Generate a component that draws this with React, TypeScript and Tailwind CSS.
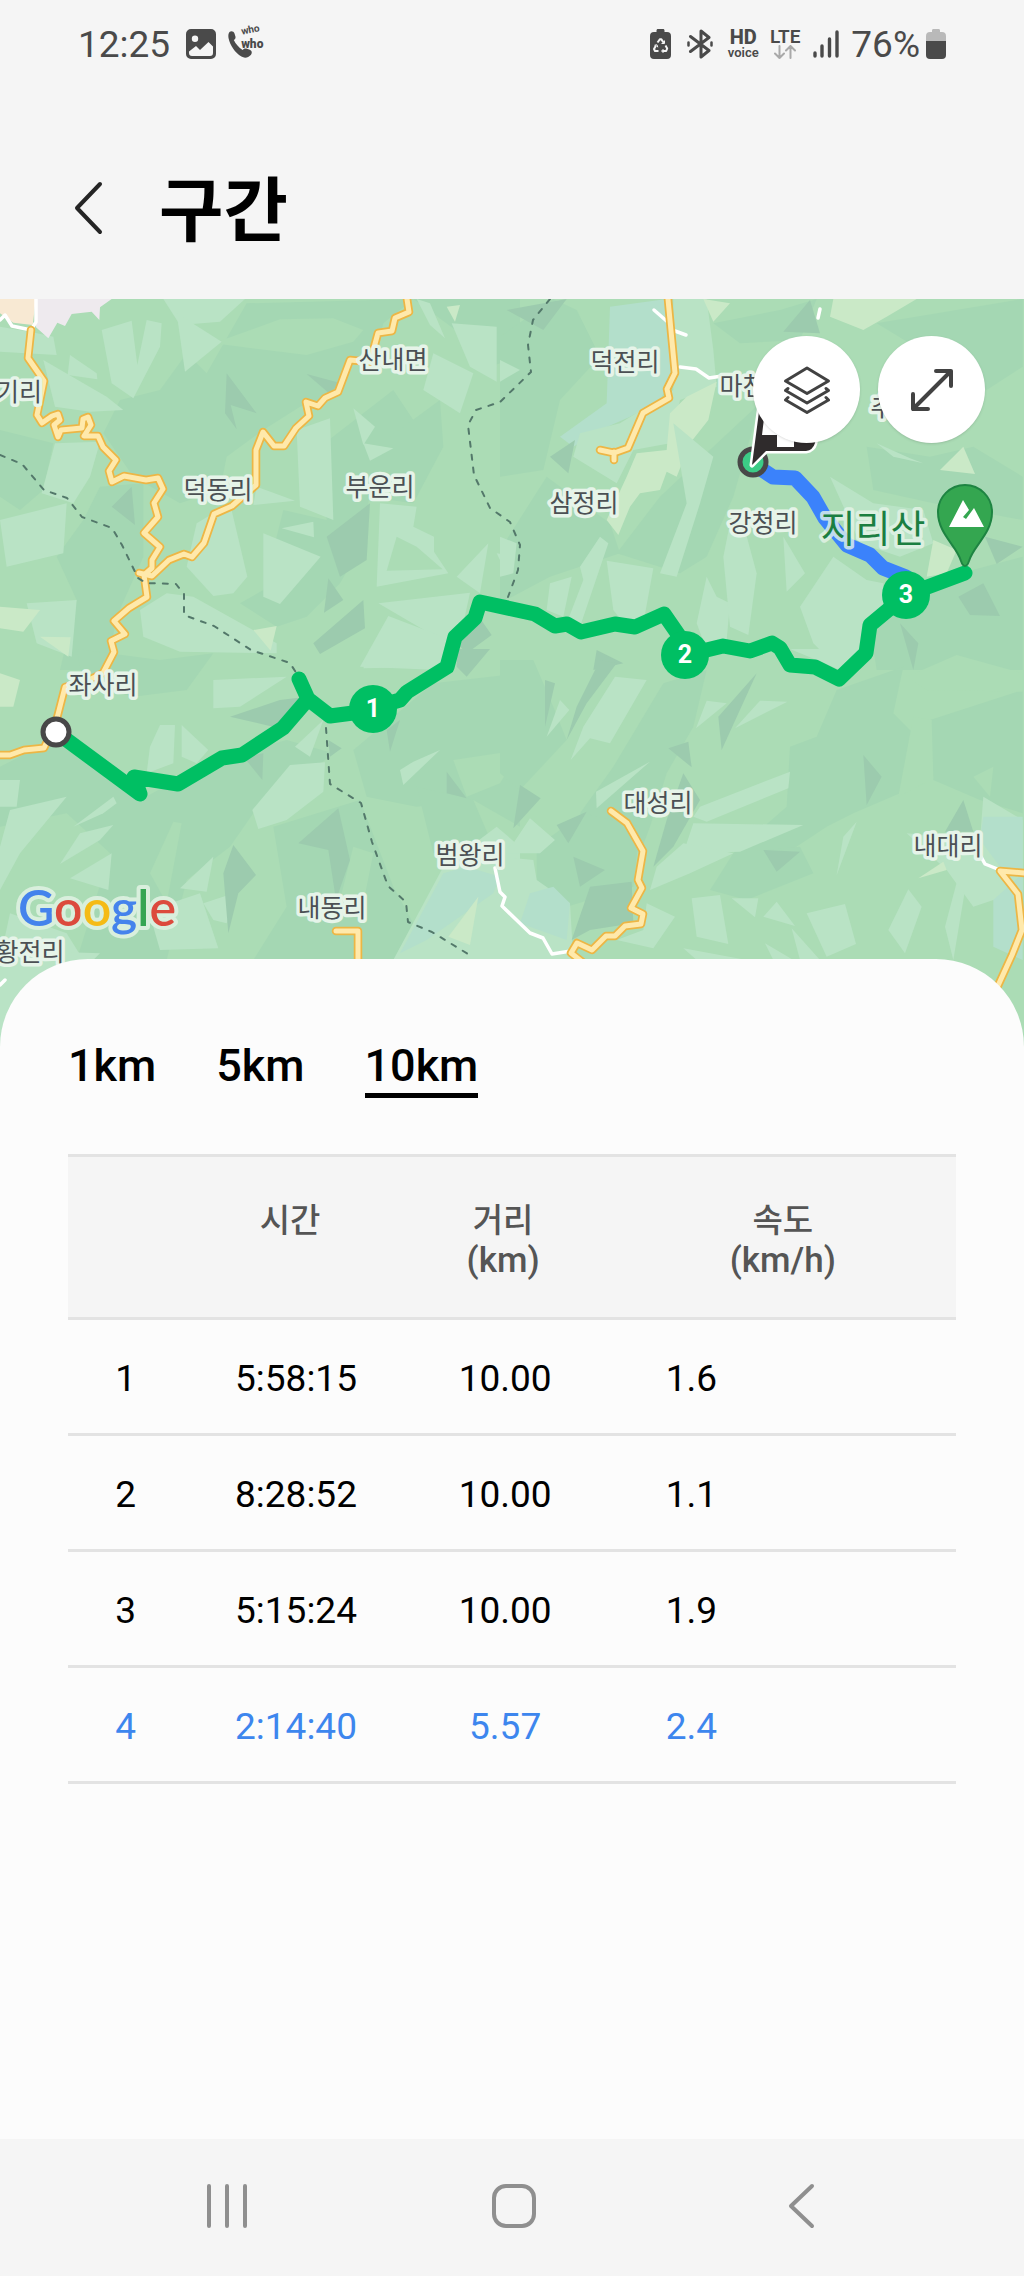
/**
 * Workout section screen - route map on top, split table per distance below
 */

import { useState } from 'react';
import clsx from 'clsx';

type Facet = [fill: string, points: string];

interface Tile {
  x: number;
  y: number;
  facets: Facet[];
}

interface Split {
  time: string;
  distance: string;
  speed: string;
  partial?: boolean;
}

const COOL = '#a4d7b3';
const WARM = '#abdcb5';
const LIGHT = '#b9e3c5';
const SHADE = '#9ccbae';
const PALE = '#cae9c7';
const TEAL = '#b3dfcb';

const UNITS = ['1km', '5km', '10km'];

const SPLITS: Split[] = [
  { time: '5:58:15', distance: '10.00', speed: '1.6' },
  { time: '8:28:52', distance: '10.00', speed: '1.1' },
  { time: '5:15:24', distance: '10.00', speed: '1.9' },
  { time: '2:14:40', distance: '5.57', speed: '2.4', partial: true },
];

// Terrain is stored in tiles at three times the map resolution
const TILES: Tile[] = [
  {
    x: 0,
    y: 290,
    facets: [
      [COOL, '480,300 560,190 620,250 740,40 1240,27 1150,100 1130,180 1040,210 1010,310 900,350 790,420 680,500 660,600 540,640 400,560 310,430 360,330'],
      [WARM, '640,160 840,88 1000,85 1090,120 1060,155 920,195'],
      [COOL, '300,590 430,580 430,800 350,980 320,1140 180,1140 230,930 170,800 250,690'],
      [COOL, '960,470 1180,300 1300,480 1110,600 1090,760 1020,880 920,980 830,1010 720,940 790,900 850,660 980,690'],
      [COOL, '1240,27 1560,27 1560,200 1440,240 1380,130'],
      [COOL, '1170,440 1320,330 1330,470 1240,640 1170,630'],
      [COOL, '0,420 160,460 130,600 60,660 0,620'],
      [LIGHT, '0,110 90,125 160,140 170,195 0,185'],
      [LIGHT, '305,120 395,92 412,225 440,90 485,100 480,170 400,325 335,280'],
      [LIGHT, '490,27 735,27 660,95 540,105'],
      [LIGHT, '530,70 665,155 555,245'],
      [LIGHT, '210,195 290,250 292,268 203,255'],
      [LIGHT, '130,210 320,320 370,360 270,365 165,350'],
      [LIGHT, '165,460 300,455 270,560 220,640 125,610'],
      [LIGHT, '890,420 990,385 1000,690 900,650'],
      [LIGHT, '1060,355 1125,410 1090,465'],
      [LIGHT, '1090,460 1180,475 1110,512'],
      [LIGHT, '1300,190 1420,250 1380,370 1270,300'],
      [LIGHT, '1355,100 1490,110 1490,275 1410,230'],
      [LIGHT, '1250,27 1290,40 1335,145 1290,105'],
      [LIGHT, '790,730 962,800 840,942 790,920'],
      [LIGHT, '590,700 690,640 742,860 700,910 640,918 560,830'],
      [LIGHT, '1140,640 1250,650 1240,710 1302,740 1302,785 1345,850 1130,890'],
      [LIGHT, '845,715 940,695 942,742'],
      [LIGHT, '770,590 885,632 760,645'],
      [LIGHT, '1370,860 1465,760 1440,910'],
      [LIGHT, '1490,790 1552,800 1540,890'],
      [LIGHT, '1135,940 1410,908 1390,1000 1340,1060'],
      [LIGHT, '1165,978 1340,1045 1320,1140 1080,1130'],
      [LIGHT, '0,690 200,640 190,790 20,830'],
      [LIGHT, '500,910 580,920 830,1060 830,1090 540,1085 430,1040 420,960'],
      [LIGHT, '80,940 230,930 215,1100 110,1060'],
      [WARM, '1190,740 1250,770 1328,838 1160,842'],
      [SHADE, '680,250 770,370 692,345 710,418 675,370'],
      [SHADE, '920,252 1018,278 990,312'],
      [SHADE, '1110,640 1100,810 1020,860 980,740'],
      [SHADE, '985,865 1030,930 972,968'],
      [SHADE, '1090,930 1095,1015 960,1092 940,1060'],
      [SHADE, '1440,985 1475,1035 1400,1090 1370,1060'],
      [SHADE, '395,590 405,705 335,650'],
      [PALE, '760,1020 830,1008 812,1082'],
      [PALE, '120,1040 212,1042 205,1100'],
      [PALE, '0,950 120,960 70,1025 0,1015'],
      [PALE, '1340,50 1380,45 1365,95'],
      ['#f8e9d3', '0,27 108,27 98,105 40,98 0,70'],
      ['#eeeaee', '108,27 335,27 300,52 298,90 275,65 215,72 195,108 172,98 145,145 108,112'],
    ],
  },
  {
    x: 500,
    y: 290,
    facets: [
      [COOL, '0,140 160,27 230,60 300,200 180,330 130,540 0,560'],
      [COOL, '0,780 140,560 330,700 360,790 150,860 0,940'],
      [COOL, '640,470 780,340 700,620 620,800 540,850 350,790 480,620'],
      [COOL, '1100,470 1290,500 1420,470 1568,560 1568,690 1300,640 1120,600'],
      [COOL, '1340,860 1568,800 1568,1140 1130,1140 1110,1010'],
      [COOL, '1130,100 1568,27 1568,230 1460,300'],
      [TEAL, '330,50 500,27 530,240 480,330 390,380 300,420 220,470 180,440 320,340'],
      [LIGHT, '520,27 620,27 640,180 650,290 540,330 510,460 400,480 350,580 220,500 240,430 360,400 520,300'],
      [PALE, '560,320 650,275 625,390 570,460 530,560 500,545 480,600 420,610 390,650 355,735 320,690 380,560 410,490 500,480 510,370'],
      [PALE, '1000,27 1250,27 1160,80 1090,120 990,80'],
      [PALE, '610,27 690,40 640,95'],
      [COOL, '640,100 840,60 950,27 900,150 720,160'],
      [SHADE, '930,30 960,130 850,125'],
      [SHADE, '20,60 200,27 130,120'],
      [LIGHT, '0,210 60,240 0,275'],
      [LIGHT, '320,812 460,835 430,1000 370,1000 340,960'],
      [LIGHT, '240,830 300,740 325,760 240,1010 200,1000 250,870'],
      [LIGHT, '150,880 215,860 190,980 140,960'],
      [LIGHT, '620,860 650,920 690,940 680,1050 620,1080 590,1000'],
      [LIGHT, '690,700 735,720 770,850 745,1035 690,1010 670,800'],
      [LIGHT, '850,740 915,850 860,905'],
      [LIGHT, '900,950 1000,800 1100,870 1150,880 1150,960 1090,1000 1080,1080 1020,1140 940,1060'],
      [LIGHT, '990,560 1120,640 1270,660 1300,760 1200,800 1080,760'],
      [LIGHT, '1130,460 1230,505 1270,520 1180,500'],
      [LIGHT, '520,400 640,500 600,640 530,860 480,850 560,640'],
      [LIGHT, '0,740 50,760 40,850 0,860'],
      [PALE, '1320,540 1390,470 1425,552'],
      [PALE, '1300,750 1370,780 1340,850 1280,860'],
      [SHADE, '1375,920 1450,880 1500,978 1410,975'],
      [SHADE, '1455,740 1568,770 1490,822'],
      [SHADE, '150,500 225,450 205,550'],
      [SHADE, '290,1080 370,1120 280,1140'],
      [SHADE, '1200,1000 1255,1060 1240,1140'],
    ],
  },
  {
    x: 0,
    y: 640,
    facets: [
      [COOL, '0,380 160,300 420,480 640,360 860,300 1000,340 900,420 760,520 690,620 560,720 500,960 230,960 330,640 200,520 0,560'],
      [COOL, '230,27 480,60 640,40 560,150 400,170 250,130'],
      [COOL, '1060,330 1300,130 1560,100 1560,560 1420,480 1250,500 1100,470'],
      [COOL, '820,560 1080,480 1180,740 1240,850 1180,960 760,960 860,800'],
      [COOL, '1250,440 1420,480 1480,620 1300,640'],
      [WARM, '1360,360 1560,330 1500,430 1400,470'],
      [LIGHT, '30,510 200,470 60,640 0,750 0,620'],
      [LIGHT, '0,420 60,420 50,500 0,500'],
      [LIGHT, '480,255 525,255 520,370 440,400 450,320'],
      [LIGHT, '545,255 625,330 590,370 545,350'],
      [LIGHT, '340,470 350,490 310,520 220,560'],
      [LIGHT, '340,555 300,600 180,672 240,580'],
      [LIGHT, '870,375 975,367 970,455 860,540 775,567 757,510'],
      [LIGHT, '335,640 325,750 210,715'],
      [LIGHT, '640,650 620,755 540,745'],
      [LIGHT, '480,800 600,760 655,925 480,930 460,860'],
      [LIGHT, '610,790 715,755 680,850 640,840'],
      [LIGHT, '1320,330 1210,435 1200,390 1240,365'],
      [LIGHT, '1110,27 1370,27 1320,80 1090,85'],
      [LIGHT, '640,120 860,110 720,200 640,205'],
      [LIGHT, '970,240 930,350 885,320'],
      [LIGHT, '30,820 200,880 250,960 0,960'],
      [LIGHT, '0,930 300,940 60,1180 0,1260'],
      [LIGHT, '1330,680 1490,560 1560,620 1560,960 1180,960'],
      [TEAL, '1330,700 1400,680 1500,710 1480,760 1280,900 1200,940'],
      [PALE, '1435,770 1410,915 1345,890'],
      [PALE, '0,100 60,120 40,200 0,200'],
      [WARM, '520,545 545,550 500,790 450,700'],
      [WARM, '1060,620 1120,640 1090,790 1020,780'],
      [SHADE, '1015,505 1050,660 1008,780 985,630 895,610'],
      [SHADE, '700,615 768,705 715,760 685,880 670,700'],
      [SHADE, '1340,395 1400,475 1340,460'],
      [SHADE, '690,230 840,180 920,170 860,270'],
      [SHADE, '730,350 790,340 787,420'],
      [SHADE, '1160,270 1200,240 1170,335'],
      [SHADE, '985,300 1025,325 990,350'],
      [SHADE, '1370,27 1470,27 1400,110 1370,80'],
    ],
  },
  {
    x: 500,
    y: 640,
    facets: [
      [COOL, '0,60 100,60 160,200 200,300 60,450 0,400'],
      [COOL, '1010,150 1210,80 1180,220 1250,290 1200,460 1060,520 980,560 860,640 700,640 860,500 870,320 950,290'],
      [COOL, '1290,240 1568,150 1568,520 1440,480 1300,420'],
      [COOL, '490,130 620,90 580,260 500,400 450,560 420,640 240,520 340,380'],
      [COOL, '110,620 250,520 420,560 400,740 200,800 110,720'],
      [COOL, '700,640 900,620 940,700 740,780 630,750'],
      [WARM, '1220,110 1370,45 1568,100 1568,155 1280,150'],
      [LIGHT, '345,110 440,120 330,310 270,295 212,360 250,260'],
      [LIGHT, '180,180 208,210 140,290'],
      [LIGHT, '620,182 680,190 588,265'],
      [LIGHT, '780,182 862,185 705,265'],
      [LIGHT, '870,395 865,445 620,545 580,530 600,500'],
      [LIGHT, '450,365 290,505 288,455'],
      [LIGHT, '580,550 910,555 720,635 550,640'],
      [LIGHT, '550,610 700,640 570,700 450,750 470,680'],
      [LIGHT, '90,535 165,600 120,640 0,640 40,610'],
      [LIGHT, '0,650 100,660 110,720 210,790 220,960 0,960'],
      [TEAL, '90,760 160,740 210,790 200,900 60,850'],
      [SHADE, '270,740 395,725 400,850 270,870 215,900'],
      [LIGHT, '440,790 525,830 460,925 350,900 430,870'],
      [LIGHT, '575,775 660,765 685,912 590,890'],
      [LIGHT, '695,775 775,775 765,832'],
      [LIGHT, '830,785 885,858 790,830'],
      [LIGHT, '920,820 1035,792 1068,912 980,950'],
      [LIGHT, '1070,545 1010,705 1030,590'],
      [LIGHT, '1225,748 1265,800 1215,940 1165,870'],
      [LIGHT, '1380,690 1400,720 1360,960 1335,860'],
      [LIGHT, '875,865 960,960 900,960'],
      [LIGHT, '795,910 880,960 820,960'],
      [LIGHT, '550,925 740,960 590,960'],
      [LIGHT, '1450,470 1568,540 1568,900 1480,780 1420,800 1340,690 1220,580 1440,600'],
      [TEAL, '1450,530 1568,530 1568,690 1500,680 1440,600'],
      [TEAL, '1480,780 1568,700 1568,960 1480,920'],
      [PALE, '1330,665 1340,690 1255,715'],
      [LIGHT, '870,27 1100,27 1080,60 1020,90 950,60'],
      [WARM, '1240,230 1295,240 1300,415 1195,470'],
      [WARM, '1480,380 1470,470 1420,410'],
      [SHADE, '1090,345 1145,410 1100,495'],
      [SHADE, '770,100 665,330 655,230'],
      [SHADE, '300,60 350,70 260,190 200,300 230,200'],
      [SHADE, '135,120 165,130 135,260'],
      [SHADE, '565,305 575,382 505,325'],
      [SHADE, '60,435 122,475 40,565'],
      [SHADE, '260,515 205,610 170,555'],
      [SHADE, '550,400 600,480 520,620 460,680 500,540'],
      [SHADE, '220,650 315,690 240,740'],
      [SHADE, '790,630 900,635 830,695'],
      [SHADE, '1390,480 1420,575 1335,575'],
    ],
  },
];

const YELLOW_ROADS = [
  'M31 330 28 358 44 381 37 415 42 423 52 416 58 414 60 420 54 425 58 437 61 430 82 428 83 419 88 417 91 425 84 436 98 436 103 447 116 460 109 471 112 482 124 476 146 480 158 478 163 489 154 503 158 517 144 533 160 547 152 560 152 568 144 575 147 597 129 608 114 621 125 634 111 641 114 652 103 673 87 681 65 687 56 722 44 748 24 750 10 755 0 755',
  'M139 573 152 576 169 560 184 554 192 557 204 543 214 514 232 506 256 485 256 450 263 432 274 446 284 446 296 428 309 416 306 402 318 406 325 398 338 392 350 360 370 362 378 333 392 331 395 318 409 312 407 299',
  'M668 299 675 373 667 389 669 398 643 413 628 448 614 453 600 450 M614 452 614 460',
  'M611 811 627 823 643 851 638 880 642 888 631 908 643 914 641 924 625 926 615 936 606 936 592 950 577 943 571 953 590 968',
  'M336 931 358 931 358 965',
  'M1024 873 1000 871 1018 894 1022 930 1012 955 996 990',
];

const WHITE_ROADS = [
  'M36 299 36 322 31 330 12 326 5 315 0 320',
  'M654 310 670 324 M675 331 686 335 M680 367 696 369 709 378 722 376',
  'M820 309 818 318',
  'M495 868 500 892 505 897 502 906 530 933 543 938 552 954 571 951',
  'M980 855 985 864 1000 870',
  'M0 985 5 980',
];

const BORDERS = [
  'M0 455 22 464 44 490 67 498 82 517 112 528 122 545 138 578 146 583 176 584 184 594 184 615 214 626 251 650 290 663 300 679',
  'M326 728 330 784 361 803 372 842 388 886 406 902 408 922 432 932 468 954',
  'M550 299 533 320 528 345 531 372 500 402 476 410 468 425 474 475 490 508 510 522 520 545 518 570 508 597',
];

const PLACES = [
  { name: '산내면', x: 393, y: 369 },
  { name: '기리', x: 19, y: 401 },
  { name: '덕동리', x: 218, y: 499 },
  { name: '부운리', x: 380, y: 496 },
  { name: '덕전리', x: 625, y: 371 },
  { name: '마천면', x: 754, y: 395 },
  { name: '추성리', x: 905, y: 416 },
  { name: '삼정리', x: 584, y: 512 },
  { name: '강청리', x: 763, y: 532 },
  { name: '좌사리', x: 103, y: 694 },
  { name: '황전리', x: 30, y: 961 },
  { name: '내동리', x: 332, y: 917 },
  { name: '범왕리', x: 470, y: 864 },
  { name: '대성리', x: 658, y: 812 },
  { name: '내대리', x: 948, y: 855 },
];

const MARKERS = [
  { label: '1', x: 373, y: 709 },
  { label: '2', x: 685, y: 655 },
  { label: '3', x: 906, y: 595 },
];

const ROUTE =
  'M56 732 140 794 134 777 178 784 222 758 242 755 283 728 308 699 299 679 308 699 330 716 353 713 373 708 400 700 407 692 447 667 455 637 475 618 480 602 535 614 555 626 567 624 581 632 615 624 635 627 664 614 682 640 690 654 723 646 750 651 772 643 780 648 790 665 815 667 839 679 866 653 870 625 906 595 965 573';

const LAST_SECTION = 'M758 467 773 477 795 478 813 497 825 518 847 545 870 555 883 568 906 577';

function StatusBar() {
  return (
    <div className="flex h-[88px] items-center justify-between pr-[78px] pl-[78px] text-[#4a4a4a]">
      <div className="flex items-center">
        <span className="text-[37px] leading-none">12:25</span>
        <svg className="ml-4 size-[30px]" viewBox="0 0 30 30" fill="currentColor">
          <path
            fillRule="evenodd"
            d="M5 0h20a5 5 0 0 1 5 5v20a5 5 0 0 1-5 5H5a5 5 0 0 1-5-5V5a5 5 0 0 1 5-5Zm4 6.500a3.200 3.200 0 1 0 0 6.400 3.200 3.200 0 0 0 0-6.400ZM3 22.500V24a3 3 0 0 0 3 3h18a3 3 0 0 0 3-3v-6.500L22.500 13 14 21l-4-4-7 5.500Z"
          />
        </svg>
        <div className="relative ml-3 h-8 w-[38px]">
          <svg className="size-full" viewBox="0 0 38 32" fill="currentColor">
            <path d="M1.500 4C3 2.500 5.800 3.200 6.500 5.500l1 3.300c.3 1.400-.5 2.600-1.700 3.200 2 4 5 7.600 8.800 10 .9-1.200 2.200-1.800 3.600-1.400l3.600 1.200c2.200.8 2.600 3.600 1 5.200-2.400 2.600-6 3.600-9.400 1.600C7 24.500 2 17.500.5 10 0 7.200.6 5 1.500 4Z" />
          </svg>
          <span className="absolute -top-1 left-[13px] -rotate-12 text-[10px] leading-[11px] font-bold">who</span>
          <span className="absolute top-[10px] left-[13px] text-[12px] leading-[12px] font-black">who</span>
        </div>
      </div>

      <div className="flex items-center">
        <svg className="h-[30px] w-[21px]" viewBox="0 0 21 30" fill="currentColor">
          <path d="M6.500 1.500C6.500.6 7 0 8 0h5c1 0 1.500.6 1.500 1.500V3H17a4 4 0 0 1 4 4v19a4 4 0 0 1-4 4H4a4 4 0 0 1-4-4V7a4 4 0 0 1 4-4h2.500Z" />
          <g fill="none" stroke="#f5f5f5" strokeWidth="2" strokeLinejoin="round">
            <path d="M7.500 13.500 10 10.200h1.200l2.600 3.600M15.500 16.500l1.700 3-1 2.500h-4M8.500 22H5l-1-2 2-3.500" />
            <path d="M14.500 11.500v3h-3M13.500 20l-2 2 2 2M4.500 16.200 7 15.800l.8 2.500" strokeWidth="1" />
          </g>
        </svg>
        <svg className="ml-4 h-[30px] w-[26px]" viewBox="0 0 26 30" fill="none" stroke="currentColor" strokeWidth="3" strokeLinejoin="round" strokeLinecap="round">
          <path d="M3.500 7.500 22 21.500l-8 6.500V2l8 6.500L3.500 22.500" />
          <path d="M1.500 13.500v3M24.500 13.500v3" strokeWidth="2.500" />
        </svg>
        <div className="ml-3.5 flex w-8 flex-col items-center">
          <span className="text-[20px] leading-[17px] font-extrabold">HD</span>
          <span className="text-[13px] leading-[13px] font-semibold">voice</span>
        </div>
        <div className="ml-2.5 flex w-8 flex-col items-center">
          <span className="text-[19px] leading-[16px] font-semibold">LTE</span>
          <svg className="h-[14px] w-[22px]" viewBox="0 0 22 14" fill="none" stroke="#a9a9a9" strokeWidth="2" strokeLinecap="round" strokeLinejoin="round">
            <path d="M5.500 1v12M1 8.500 5.500 13 10 8.500M16.500 13V1M12 5.500 16.500 1 21 5.500" />
          </svg>
        </div>
        <svg className="ml-3 h-7 w-[26px]" viewBox="0 0 26 28" fill="none" stroke="currentColor" strokeWidth="3.400" strokeLinecap="round">
          <path d="M2 23v3M9 16v10M16.500 9v17M24 2v24" />
        </svg>
        <span className="ml-3 text-[37px] leading-none">76%</span>
        <svg className="ml-1.5 h-[30px] w-[20px]" viewBox="0 0 20 30" fill="currentColor">
          <path d="M6 1.500C6 .6 6.500 0 7.500 0h5c1 0 1.500.6 1.500 1.500V3h2a4 4 0 0 1 4 4v5H0V7a4 4 0 0 1 4-4h2Z" fill="#b9b9b9" />
          <path d="M0 12h20v14a4 4 0 0 1-4 4H4a4 4 0 0 1-4-4Z" />
        </svg>
      </div>
    </div>
  );
}

function RouteMap() {
  return (
    <svg className="block aspect-[1024/760] w-full" viewBox="0 299 1024 760" preserveAspectRatio="xMidYMin slice">
      <rect y="299" width="1024" height="760" fill={WARM} />
      {TILES.map((tile) => (
        <g key={`${tile.x}-${tile.y}`} transform={`translate(${tile.x} ${tile.y}) scale(0.33333)`}>
          {tile.facets.map(([fill, points]) => (
            <polygon key={points} fill={fill} points={points} />
          ))}
        </g>
      ))}

      {/* Roads and district borders */}
      <g fill="none" strokeLinejoin="round" strokeLinecap="round">
        {WHITE_ROADS.map((d) => (
          <path key={d} d={d} stroke="#ffffff" strokeWidth="3.500" />
        ))}
        {YELLOW_ROADS.map((d) => (
          <path key={d} d={d} stroke="#edb645" strokeWidth="8.500" />
        ))}
        {YELLOW_ROADS.map((d) => (
          <path key={d} d={d} stroke="#ffe9ab" strokeWidth="5" />
        ))}
        {BORDERS.map((d) => (
          <path key={d} d={d} stroke="#53786a" strokeWidth="2" strokeDasharray="5 8" />
        ))}
      </g>

      {/* Recorded route */}
      <g fill="none" strokeLinejoin="round" strokeLinecap="round" strokeWidth="15">
        <path d={LAST_SECTION} stroke="#3b82fb" />
        <path d={ROUTE} stroke="#00bf63" />
      </g>

      {/* Place names */}
      <g
        className="font-['Noto_Sans_CJK_KR',sans-serif] text-[25px]"
        fill="#4b5054"
        stroke="#e6f4e9"
        strokeWidth="7"
        strokeLinejoin="round"
        paintOrder="stroke"
        textAnchor="middle"
      >
        {PLACES.map((place) => (
          <text key={place.name} x={place.x} y={place.y}>
            {place.name}
          </text>
        ))}
        <text className="text-[38px]" x="873" y="542" fill="#1b7f41" strokeOpacity="0.8">
          지리산
        </text>
      </g>

      {/* Distance markers */}
      <g className="text-[25px] font-bold" textAnchor="middle">
        {MARKERS.map((marker) => (
          <g key={marker.label}>
            <circle cx={marker.x} cy={marker.y} r="24" fill="#00bf63" />
            <text x={marker.x} y={marker.y + 8} fill="#ffffff">
              {marker.label}
            </text>
          </g>
        ))}
      </g>

      {/* Start and finish */}
      <circle cx="56" cy="732" r="13" fill="#ffffff" stroke="#484848" strokeWidth="5" />
      <circle cx="753" cy="462" r="13" fill="#3ccc86" stroke="#484848" strokeWidth="5" />
      <path d="M752 465 760 404 820 400 815 443Q813 450 806 451H766Z" fill="#2f2b2c" stroke="#ffffff" strokeWidth="5" strokeLinejoin="round" />
      <path d="M752 465 760 404 820 400 815 443Q813 450 806 451H766Z" fill="#2f2b2c" />
      <path d="M762 435 765 410H800V435ZM777 435H794V447H777Z" fill="#ffffff" />

      {/* Mountain pin */}
      <path
        d="M965 566C963 566 962 564 961 561C957 546 938 534 938 512A27 27 0 0 1 992 512C992 534 973 546 969 561C968 564 967 566 965 566Z"
        fill="#34a650"
        stroke="#1e8442"
        strokeWidth="2"
      />
      <path d="M949 527 963 500 969 510 963 517 966 519 974 508 984 527Z" fill="#ffffff" />

      <text
        className="font-[Lato] text-[50px] font-semibold"
        x="18"
        y="926"
        stroke="#d9efdd"
        strokeWidth="8"
        strokeLinejoin="round"
        paintOrder="stroke"
      >
        <tspan fill="#4583ec">G</tspan>
        <tspan fill="#dc4a3d">o</tspan>
        <tspan fill="#f5bb16">o</tspan>
        <tspan fill="#4583ec">g</tspan>
        <tspan fill="#35a553">l</tspan>
        <tspan fill="#dc4a3d">e</tspan>
      </text>
    </svg>
  );
}

function MapButtons() {
  return (
    <div className="absolute top-[37px] right-[39px] flex gap-[18px] text-[#424242]">
      <button type="button" aria-label="Map type" className="flex size-[107px] items-center justify-center rounded-full bg-white shadow-sm">
        <svg className="size-12" viewBox="0 0 48 48" fill="none" stroke="currentColor" strokeWidth="3" strokeLinejoin="round" strokeLinecap="round">
          <path d="M24 2 45.500 15 24 27.500 2.500 15Z" />
          <path d="M5 22.500 2.500 24.500 24 37 45.500 24.500 43 22.500" />
          <path d="M5 31.500 2.500 34 24 46.500 45.500 34 43 31.500" />
        </svg>
      </button>
      <button type="button" aria-label="Expand map" className="flex size-[107px] items-center justify-center rounded-full bg-white shadow-sm">
        <svg className="size-11" viewBox="0 0 44 44" fill="none" stroke="currentColor" strokeWidth="4" strokeLinejoin="round" strokeLinecap="round">
          <path d="M3 41 41 3M26 3H41V18M3 26V41H18" />
        </svg>
      </button>
    </div>
  );
}

function SplitTable() {
  return (
    <table className="mt-14 w-full table-fixed border-collapse text-center">
      <thead>
        <tr className="h-[163px] border-y-[3px] border-[#e3e3e3] bg-[#f5f5f5] align-top text-[33px] leading-10 text-[#555555]">
          <th className="w-[13%]" />
          <th className="w-[24%] pt-11 font-medium">시간</th>
          <th className="w-[24%] pt-11 font-medium">
            거리
            <span className="block text-[35px]">(km)</span>
          </th>
          <th className="w-[39%] pt-11 font-medium">
            속도
            <span className="block text-[35px]">(km/h)</span>
          </th>
        </tr>
      </thead>
      <tbody>
        {SPLITS.map((split, index) => (
          <tr
            key={split.time}
            className={clsx(
              'h-[116px] border-b-[3px] border-[#e3e3e3] text-[37px]',
              split.partial ? 'text-[#3d86ee]' : 'text-black'
            )}
          >
            <td className="pt-1">{index + 1}</td>
            <td className="pt-1 pl-3">{split.time}</td>
            <td className="pt-1 pl-1">{split.distance}</td>
            <td className="pt-1 pl-14 text-left">{split.speed}</td>
          </tr>
        ))}
      </tbody>
    </table>
  );
}

function NavigationBar() {
  return (
    <nav className="grid h-[137px] grid-cols-3 place-items-center bg-[#f5f5f5] pr-20 pb-1 pl-[84px] text-[#8f8f8f]">
      <button type="button" aria-label="Recent apps">
        <svg className="size-[46px]" viewBox="0 0 46 46" fill="none" stroke="currentColor" strokeWidth="4" strokeLinecap="round">
          <path d="M5 3v40M23 3v40M41 3v40" />
        </svg>
      </button>
      <button type="button" aria-label="Home">
        <svg className="size-[46px]" viewBox="0 0 46 46" fill="none" stroke="currentColor" strokeWidth="4">
          <rect x="3" y="3" width="40" height="40" rx="12" />
        </svg>
      </button>
      <button type="button" aria-label="Back">
        <svg className="size-[46px]" viewBox="0 0 46 46" fill="none" stroke="currentColor" strokeWidth="4" strokeLinecap="round" strokeLinejoin="round">
          <path d="M34 3 13 23 34 43" />
        </svg>
      </button>
    </nav>
  );
}

export default function App() {
  const [unit, setUnit] = useState('10km');

  return (
    <div className="flex min-h-screen flex-col bg-[#f5f5f5] font-[Roboto,'Noto_Sans_CJK_KR',sans-serif] text-black">
      <StatusBar />

      <header className="flex h-[211px] items-center gap-14 pt-7 pl-[73px]">
        <button type="button" aria-label="Go back" className="text-[#252525]">
          <svg className="h-[54px] w-[30px]" viewBox="0 0 30 54" fill="none" stroke="currentColor" strokeWidth="4" strokeLinecap="round" strokeLinejoin="round">
            <path d="M27 3 4 27 27 51" />
          </svg>
        </button>
        <h1 className="pt-2 text-[70px] leading-none font-bold">구간</h1>
      </header>

      <div className="relative">
        <RouteMap />
        <MapButtons />
      </div>

      {/* Bottom sheet */}
      <main className="relative -mt-[100px] flex-1 rounded-t-[88px] bg-[#fcfcfc] px-[68px] pt-20">
        <div className="flex gap-[60px]">
          {UNITS.map((item) => (
            <button
              key={item}
              type="button"
              onClick={() => setUnit(item)}
              className={clsx(
                'border-b-[5px] text-[45px] leading-[54px] font-medium',
                unit === item ? 'border-black' : 'border-transparent'
              )}
            >
              {item}
            </button>
          ))}
        </div>
        <SplitTable />
      </main>

      <NavigationBar />
    </div>
  );
}
